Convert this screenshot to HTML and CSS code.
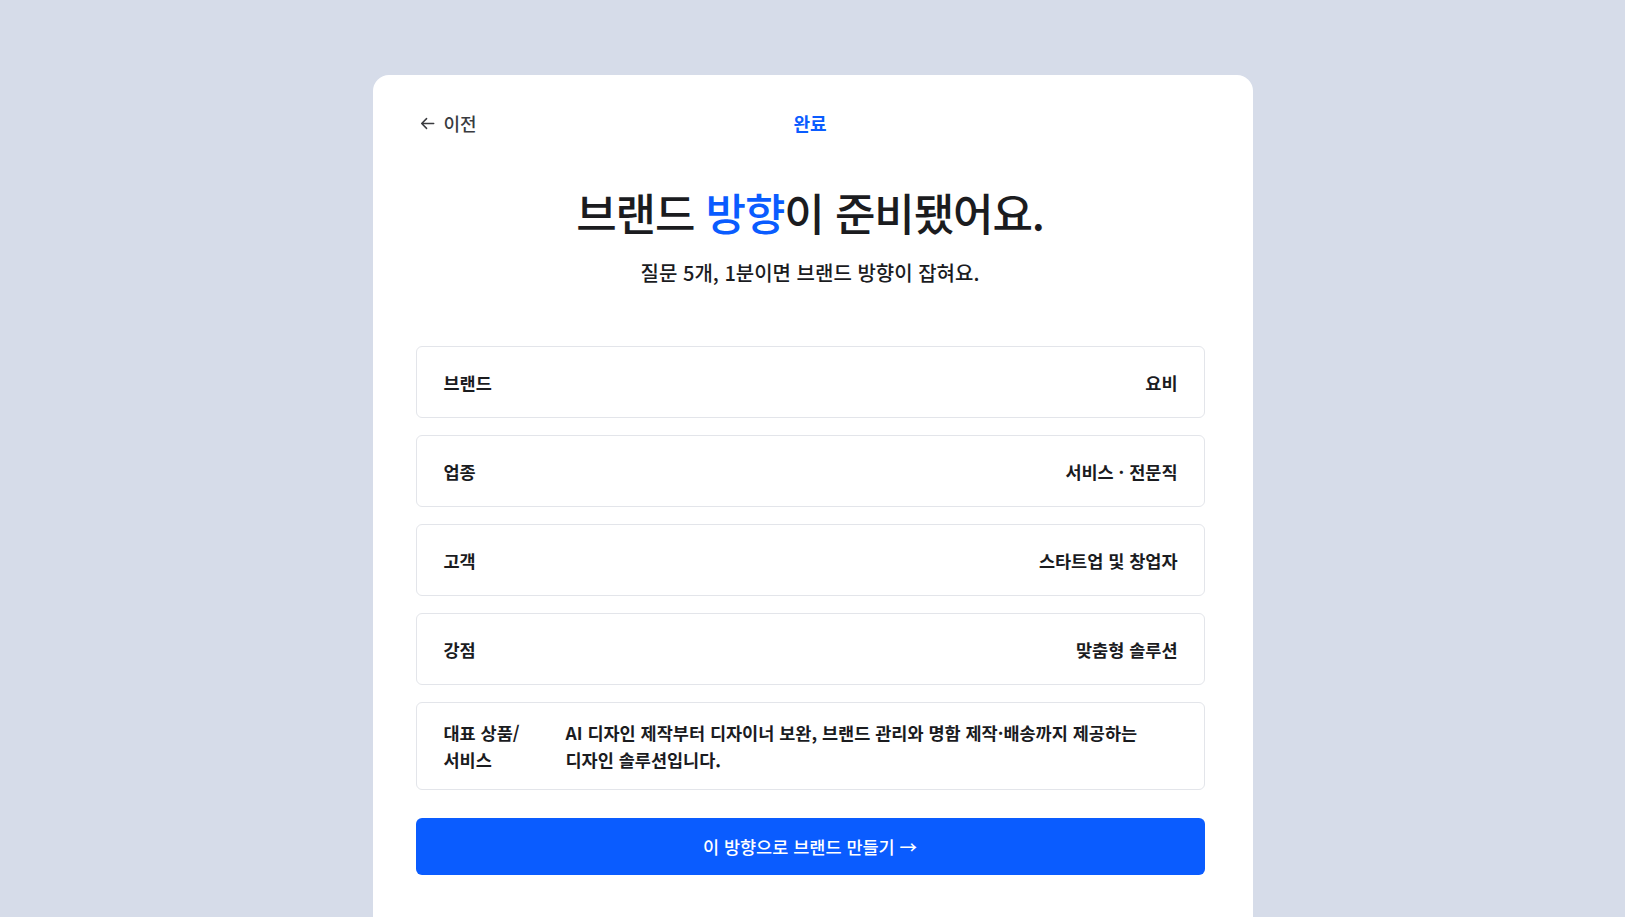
FILE: index.html
```html
<!DOCTYPE html>
<html lang="ko">
<head>
<meta charset="utf-8">
<title>브랜드 방향</title>
<link rel="stylesheet" href="styles.css">
</head>
<body>
<div class="page">
  <main class="card">
    <header class="topbar">
      <a class="back" href="#">
        <svg class="back-icon" viewBox="0 0 16 16" width="16" height="16" aria-hidden="true">
          <path d="M14.6 8H1.8M7 2.8L1.8 8 7 13.2" fill="none" stroke="currentColor" stroke-width="1.6" stroke-linecap="round" stroke-linejoin="round"/>
        </svg>
        <span>이전</span>
      </a>
      <div class="step">완료</div>
      <div></div>
    </header>

    <h1 class="title">브랜드 <span class="accent">방향</span>이 준비됐어요.</h1>
    <p class="subtitle">질문 5개, 1분이면 브랜드 방향이 잡혀요.</p>

    <section class="rows">
      <div class="row">
        <div class="label">브랜드</div>
        <div class="value">요비</div>
      </div>
      <div class="row">
        <div class="label">업종</div>
        <div class="value">서비스 · 전문직</div>
      </div>
      <div class="row">
        <div class="label">고객</div>
        <div class="value">스타트업 및 창업자</div>
      </div>
      <div class="row">
        <div class="label">강점</div>
        <div class="value">맞춤형 솔루션</div>
      </div>
      <div class="row row-multi">
        <div class="label label-fixed">대표 상품/<br>서비스</div>
        <div class="value value-left">AI 디자인 제작부터 디자이너 보완, 브랜드 관리와 명함 제작·배송까지 제공하는 디자인 솔루션입니다.</div>
      </div>
    </section>

    <button class="cta" type="button">이 방향으로 브랜드 만들기 →</button>
  </main>
</div>
</body>
</html>
```

FILE: styles.css
```css
* { box-sizing: border-box; }

html, body {
  margin: 0;
  padding: 0;
}

body {
  background: #d6dce9;
  font-family: "Noto Sans CJK KR", "Noto Sans", sans-serif;
  color: #1b1c1f;
  height: 917px;
  overflow: hidden;
}

.page {
  display: flex;
  justify-content: center;
  padding-top: 75px;
}

.card {
  width: 880px;
  min-height: 900px;
  background: #ffffff;
  border-radius: 16px 16px 0 0;
  padding: 35px 48px 40px 43px;
}

.topbar {
  display: grid;
  grid-template-columns: 1fr auto 1fr;
  align-items: center;
  height: 24px;
  padding: 0 4px;
}

.back {
  display: inline-flex;
  align-items: center;
  gap: 9px;
  color: #3a3b3f;
  text-decoration: none;
  font-size: 18px;
  font-weight: 500;
  justify-self: start;
}

.back-icon {
  display: block;
  width: 15px;
  height: 15px;
}

.step {
  color: #0a5cff;
  font-size: 18px;
  font-weight: 700;
}

.title {
  margin: 50px 0 0;
  text-align: center;
  font-size: 44px;
  line-height: 56px;
  font-weight: 500;
  letter-spacing: -0.025em;
  color: #1b1c1f;
}

.accent { color: #0a5cff; }

.subtitle {
  margin: 19px 0 0;
  text-align: center;
  font-size: 20px;
  line-height: 28px;
  font-weight: 500;
  color: #1b1c1f;
}

.rows {
  margin-top: 59px;
  display: flex;
  flex-direction: column;
  gap: 17px;
}

.row {
  display: flex;
  align-items: center;
  justify-content: space-between;
  min-height: 72px;
  padding: 16px 26px 16px 27px;
  border: 1px solid #e3e5ea;
  border-radius: 6px;
  font-size: 17.5px;
  line-height: 27px;
}

.label {
  font-weight: 700;
  color: #1b1c1f;
}

.value {
  font-weight: 600;
  color: #1b1c1f;
  text-align: right;
}

.row-multi {
  align-items: flex-start;
  justify-content: flex-start;
  gap: 26px;
  min-height: 87px;
}

.label-fixed {
  flex: 0 0 96px;
}

.value-left {
  flex: 1;
  text-align: left;
  word-break: keep-all;
  padding-right: 14px;
}

.cta {
  display: block;
  width: 100%;
  margin-top: 28px;
  height: 57px;
  border: none;
  border-radius: 6px;
  background: #0a5cff;
  color: #ffffff;
  font-family: inherit;
  font-size: 17.5px;
  font-weight: 500;
  cursor: pointer;
}
```
